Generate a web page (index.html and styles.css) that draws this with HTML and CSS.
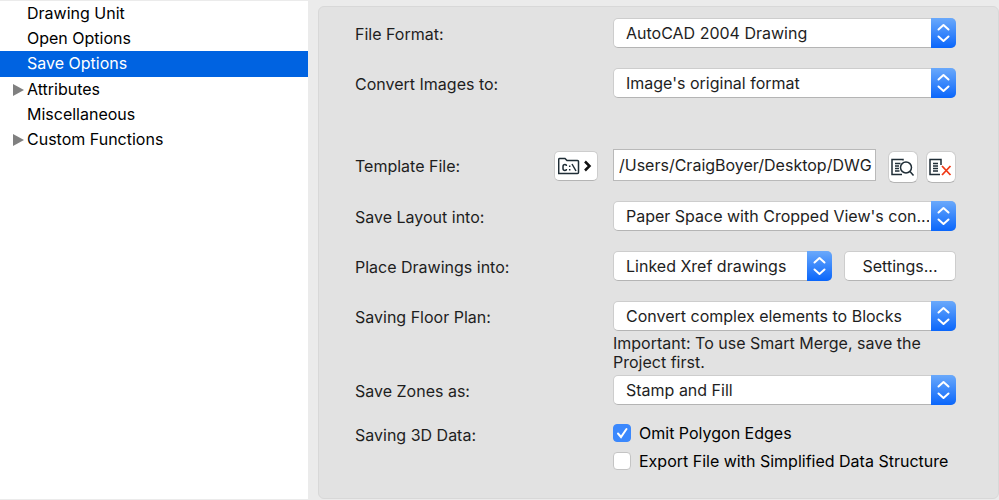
FILE: index.html
```
<!doctype html>
<html lang="en">
<head>
	<title>Save Options</title>
	<meta charset="utf-8">
	<link rel="stylesheet" href="styles.css">
</head>
<body>
	<!-- shared arrows of the drop-downs -->
	<svg class="symbols">
		<symbol id="arrows" viewBox="0 0 25 30">
			<path d="M7.500 11.500 L12.500 7 L17.500 11.500 M7.500 18.500 L12.500 23 L17.500 18.500" />
		</symbol>
	</svg>
	<nav class="sidebar">
		<ul class="tree">
			<li><a href="#">Drawing Unit</a></li>
			<li><a href="#">Open Options</a></li>
			<li class="selected"><a href="#">Save Options</a></li>
			<li class="parent"><a href="#">Attributes</a></li>
			<li><a href="#">Miscellaneous</a></li>
			<li class="parent"><a href="#">Custom Functions</a></li>
		</ul>
	</nav>
	<main class="content">
		<form class="panel">
			<div class="row">
				<label class="name" for="fileFormat">File Format:</label>
				<div class="dropdown">
					<select id="fileFormat"><option>AutoCAD 2004 Drawing</option></select>
					<svg class="arrows"><use href="#arrows" /></svg>
				</div>
			</div>
			<div class="row">
				<label class="name" for="convertImages">Convert Images to:</label>
				<div class="dropdown">
					<select id="convertImages"><option>Image's original format</option></select>
					<svg class="arrows"><use href="#arrows" /></svg>
				</div>
			</div>
			<div class="row template">
				<div class="name with-button">
					<label for="templateFile">Template File:</label>
					<button type="button" class="button browse" aria-label="Browse">
						<svg width="36" height="20" viewBox="0 0 36 20">
							<path class="line" d="M0.700 17.500 V3.500 Q0.700 2.500 1.700 2.500 H7 L9 4.500 H19.500 Q20.500 4.500 20.500 5.500 V16.500 Q20.500 17.500 19.500 17.500 Z" />
							<path class="line" d="M8.500 10 Q8.500 8.500 7 8.500 Q5 8.500 5 10.500 V12.500 Q5 14.500 7 14.500 Q8.500 14.500 8.500 13 M11.700 9.500 V11 M11.700 13 V14.500 M14 8 L18 15" />
							<path class="chevron" d="M27 5.500 L31.500 10 L27 14.500" />
						</svg>
					</button>
				</div>
				<div class="fields">
					<input type="text" id="templateFile" class="path" value="/Users/CraigBoyer/Desktop/DWG">
					<div class="tools">
						<button type="button" class="button tool" aria-label="Show template">
							<svg width="24" height="20" viewBox="0 0 24 20">
								<path class="line" d="M12 3.500 V2.500 H1 V17.500 H11 M4 6.500 H9.500 M4 9 H8 M4 11.500 H8 M4 14 H8.500" />
								<circle class="line" cx="15" cy="10.500" r="5.500" />
								<path class="line" d="M19 14.500 L22.500 18.500" />
							</svg>
						</button>
						<button type="button" class="button tool" aria-label="Remove template">
							<svg width="24" height="20" viewBox="0 0 24 20">
								<path class="line" d="M12 8 V2.500 H1 V17.500 H11 M4 6.500 H9 M4 9 H9 M4 11.500 H9 M4 14 H9" />
								<path class="cross" d="M13 9 L21.500 18 M21.500 9 L13 18" />
							</svg>
						</button>
					</div>
				</div>
			</div>
			<div class="row">
				<label class="name" for="saveLayout">Save Layout into:</label>
				<div class="dropdown">
					<select id="saveLayout"><option>Paper Space with Cropped View's con...</option></select>
					<svg class="arrows"><use href="#arrows" /></svg>
				</div>
			</div>
			<div class="row">
				<label class="name" for="placeDrawings">Place Drawings into:</label>
				<div class="fields">
					<div class="dropdown">
						<select id="placeDrawings"><option>Linked Xref drawings</option></select>
						<svg class="arrows"><use href="#arrows" /></svg>
					</div>
					<button type="button" class="button settings">Settings...</button>
				</div>
			</div>
			<div class="row plan">
				<label class="name" for="floorPlan">Saving Floor Plan:</label>
				<div>
					<div class="dropdown">
						<select id="floorPlan"><option>Convert complex elements to Blocks</option></select>
						<svg class="arrows"><use href="#arrows" /></svg>
					</div>
					<p class="note">Important: To use Smart Merge, save the Project first.</p>
				</div>
			</div>
			<div class="row zones">
				<label class="name" for="saveZones">Save Zones as:</label>
				<div class="dropdown">
					<select id="saveZones"><option>Stamp and Fill</option></select>
					<svg class="arrows"><use href="#arrows" /></svg>
				</div>
			</div>
			<div class="row data">
				<span class="name" id="dataName">Saving 3D Data:</span>
				<div role="group" aria-labelledby="dataName">
					<label class="check">
						<span class="box">
							<input type="checkbox" checked>
							<svg class="tick" viewBox="0 0 18 18"><path d="M5 9.500 L8 13 L13.500 5" /></svg>
						</span>
						Omit Polygon Edges
					</label>
					<label class="check">
						<span class="box">
							<input type="checkbox">
							<svg class="tick" viewBox="0 0 18 18"><path d="M5 9.500 L8 13 L13.500 5" /></svg>
						</span>
						Export File with Simplified Data Structure
					</label>
				</div>
			</div>
		</form>
	</main>
</body>
</html>
```

FILE: styles.css
```
* {
	box-sizing: border-box;
}
body {
	display: flex;
	min-height: 100vh;
	margin: 0;
	background: #ebebeb;
	color: #1e1e1e;
	font-family: Inter, "Liberation Sans", sans-serif;
	font-size: 16px;
}
button, input, select {
	margin: 0;
	font: inherit;
	color: inherit;
}
.symbols {
	position: absolute;
	width: 0;
	height: 0;
}

/* Sidebar */
.sidebar {
	flex: none;
	width: 308px;
	background: #fff;
	border-top: 1px solid #ebebeb;
	border-bottom: 1px solid #ebebeb;
}
.tree {
	margin: 0;
	padding: 0;
	list-style: none;
}
.tree li {
	display: flex;
	align-items: center;
	padding-left: 27px;
	line-height: 25px;
}
.tree a {
	color: #000;
	text-decoration: none;
}
.tree .selected {
	background: #0063e1;
	border-bottom: 1px solid #0063e1;
}
.tree .selected a {
	color: #fff;
}
.tree .parent {
	padding-left: 13px;
}
.tree .parent::before {
	content: "";
	width: 0;
	margin-right: 3px;
	border: solid transparent;
	border-width: 6px 0 6px 11px;
	border-left-color: #808080;
}

/* Panel */
.content {
	flex: 1;
	min-width: 0;
	display: flex;
	padding: 6px 0 1px 10px;
}
.panel {
	flex: 1;
	min-width: 0;
	padding: 11px 42px 0 36px;
	background: #e2e2e2;
	border: 1px solid #d8d8d8;
	border-radius: 6px;
}
.row {
	display: grid;
	grid-template-columns: 258px minmax(0, 1fr);
	margin-bottom: 20px;
}
.name {
	height: 30px;
	line-height: 32px;
}
.with-button {
	display: flex;
	justify-content: space-between;
	align-items: center;
	height: 34px;
	padding-right: 15px;
}
.template {
	margin-top: 51px;
	margin-bottom: 18px;
}
.plan {
	margin-bottom: 0;
}
.zones {
	margin-bottom: 14px;
}
.data {
	margin-bottom: 0;
}
.fields {
	display: flex;
	align-items: flex-start;
	gap: 12px;
}
.fields .dropdown {
	flex: 1;
}

/* Controls */
.dropdown {
	position: relative;
	height: 30px;
}
select {
	appearance: none;
	display: block;
	width: 100%;
	height: 30px;
	padding: 0 26px 0 12px;
	background: #fff;
	border: 1px solid #cdcdcd;
	border-bottom-color: #b4b4b4;
	border-radius: 5px;
}
.arrows {
	position: absolute;
	top: 0;
	right: 0;
	width: 25px;
	height: 30px;
	background: linear-gradient(#6aa9fb, #0a66fb);
	border-radius: 0 5px 5px 0;
	fill: none;
	stroke: #fff;
	stroke-width: 2;
	stroke-linecap: round;
	stroke-linejoin: round;
	pointer-events: none;
}
.button {
	display: flex;
	flex: none;
	align-items: center;
	justify-content: center;
	height: 30px;
	padding: 0;
	background: #fff;
	border: 1px solid #cdcdcd;
	border-bottom-color: #b4b4b4;
	border-radius: 5px;
}
.button svg {
	fill: none;
}
.browse {
	width: 44px;
}
.tools {
	display: flex;
	gap: 8px;
	padding-top: 2px;
}
.tool {
	width: 30px;
	height: 32px;
	border-radius: 6px;
}
.settings {
	width: 112px;
}
.line {
	stroke: #1f2d36;
	stroke-width: 1.5;
}
.chevron {
	stroke: #111;
	stroke-width: 2.5;
}
.cross {
	stroke: #f03a17;
	stroke-width: 1.8;
}
.path {
	flex: 1;
	min-width: 0;
	height: 32px;
	padding: 0 1px 0 5px;
	background: #fff;
	border: 1px solid #b9b9b9;
	border-radius: 0;
}
.note {
	margin: 3px 0;
	line-height: 19px;
}
.check {
	display: flex;
	align-items: center;
	gap: 8px;
	height: 28px;
	color: #000;
	white-space: nowrap;
}
.box {
	position: relative;
	flex: none;
	width: 18px;
	height: 18px;
}
.box input {
	appearance: none;
	display: block;
	width: 18px;
	height: 18px;
	background: #fff;
	border: 1px solid #c4c4c4;
	border-radius: 4px;
}
.box input:checked {
	background: #3b88fd;
	border-color: #3b88fd;
}
.tick {
	display: none;
	position: absolute;
	top: 0;
	left: 0;
	width: 18px;
	height: 18px;
	fill: none;
	stroke: #fff;
	stroke-width: 2;
	stroke-linecap: round;
	pointer-events: none;
}
.box input:checked + .tick {
	display: block;
}
```
